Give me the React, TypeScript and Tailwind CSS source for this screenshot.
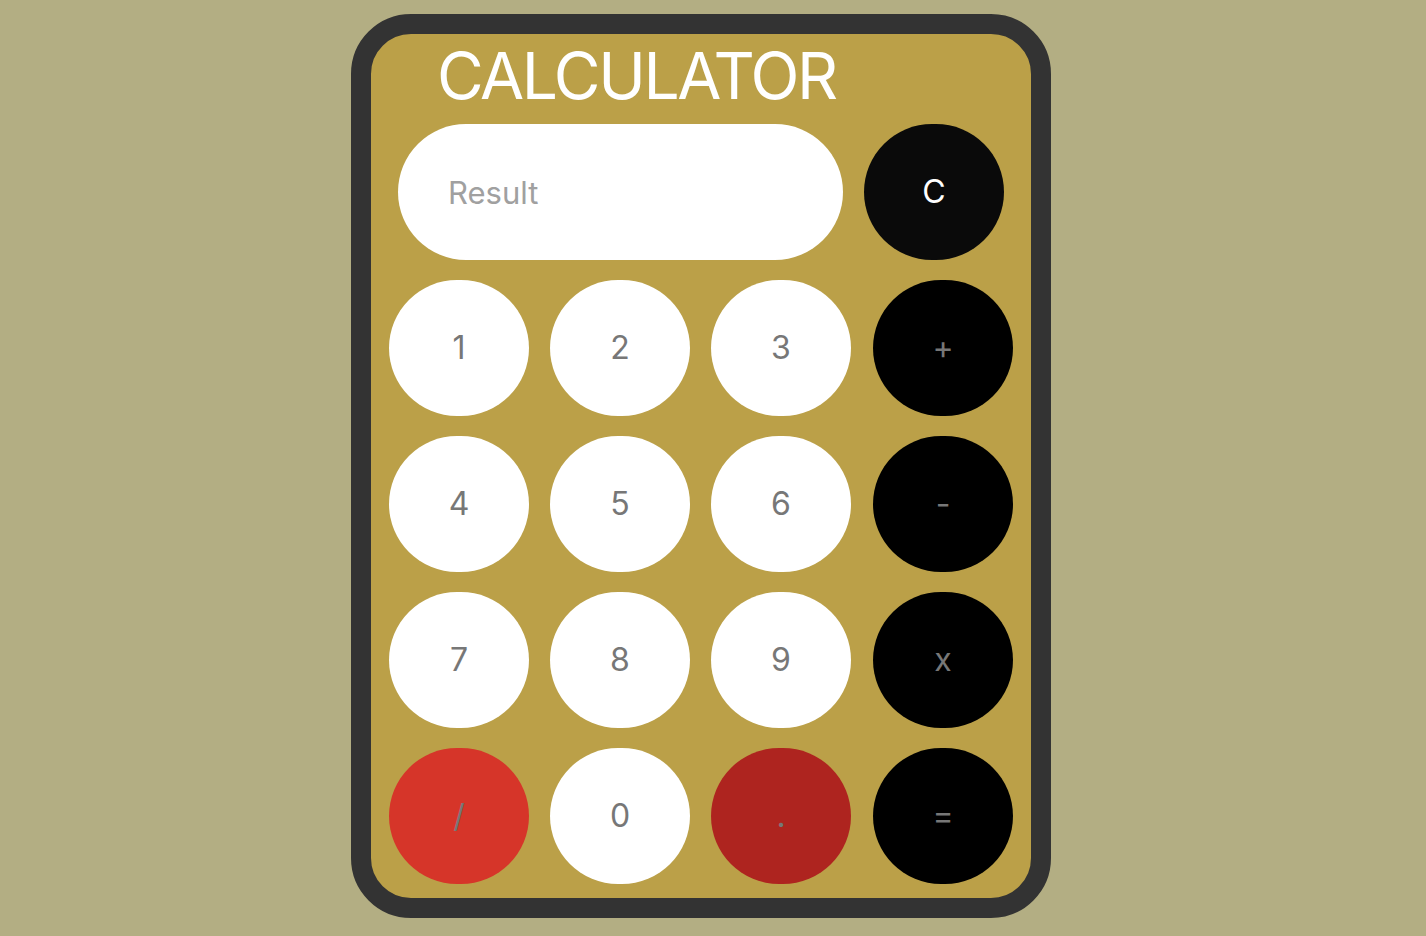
import React, { useState } from "react";

const keys: { label: string; bg: string; text: string }[] = [
    { label: "1", bg: "bg-white", text: "text-[#777]" },
    { label: "2", bg: "bg-white", text: "text-[#777]" },
    { label: "3", bg: "bg-white", text: "text-[#777]" },
    { label: "+", bg: "bg-black", text: "text-[#777]" },
    { label: "4", bg: "bg-white", text: "text-[#777]" },
    { label: "5", bg: "bg-white", text: "text-[#777]" },
    { label: "6", bg: "bg-white", text: "text-[#777]" },
    { label: "-", bg: "bg-black", text: "text-[#777]" },
    { label: "7", bg: "bg-white", text: "text-[#777]" },
    { label: "8", bg: "bg-white", text: "text-[#777]" },
    { label: "9", bg: "bg-white", text: "text-[#777]" },
    { label: "x", bg: "bg-black", text: "text-[#777]" },
    { label: "/", bg: "bg-[#d63529]", text: "text-[#777]" },
    { label: "0", bg: "bg-white", text: "text-[#777]" },
    { label: ".", bg: "bg-[#ae241f]", text: "text-[#777]" },
    { label: "=", bg: "bg-black", text: "text-[#777]" },
];

const App = () => {
    const [result, setResult] = useState<string>("")

    const handleClick = (label: string) => {
        if (label === "=") {
            try {
                // eslint-disable-next-line no-eval
                setResult(String(eval(result.replace(/x/g, "*"))))
            } catch (e) {
                setResult("Error")
            }
            return
        }
        setResult(result + label)
    }

    return (
        <div className="h-screen overflow-hidden bg-[#b3ae83] flex justify-center pt-[14px] font-['Inter',sans-serif]">
            <div className="w-[700px] h-[904px] mr-[24px] border-[20px] border-[#333333] rounded-[60px] bg-[#bba048] flex flex-col">
                <h1 className="text-white text-[64px] tracking-[-2.4px] leading-[80px] pl-[66px] mt-[2px] h-[88px]">
                    CALCULATOR
                </h1>
                <div className="flex items-center pl-[27px] gap-[21px]">
                    <input
                        value={result}
                        readOnly
                        placeholder="Result"
                        className="w-[445px] h-[136px] rounded-full bg-white pl-[50px] text-[31px] text-[#333] placeholder:text-[#a0a0a0] outline-none"
                    />
                    <button
                        onClick={() => setResult("")}
                        className="w-[140px] h-[136px] rounded-full bg-[#0a0a0a] text-white text-[32px]"
                    >
                        C
                    </button>
                </div>
                <div className="grid grid-cols-[140px_140px_140px_141px] gap-x-[21px] gap-y-[20px] pl-[18px] mt-[20px]">
                    {keys.map((k, i) => {
                        return <button
                            key={k.label}
                            onClick={() => handleClick(k.label)}
                            className={`w-[140px] h-[136px] rounded-full ${k.bg} ${k.text} text-[32px] flex items-center justify-center ${i % 4 === 3 ? "justify-self-end" : ""}`}
                        >
                            {k.label}
                        </button>
                    })}
                </div>
            </div>
        </div>
    )
}

export default App
